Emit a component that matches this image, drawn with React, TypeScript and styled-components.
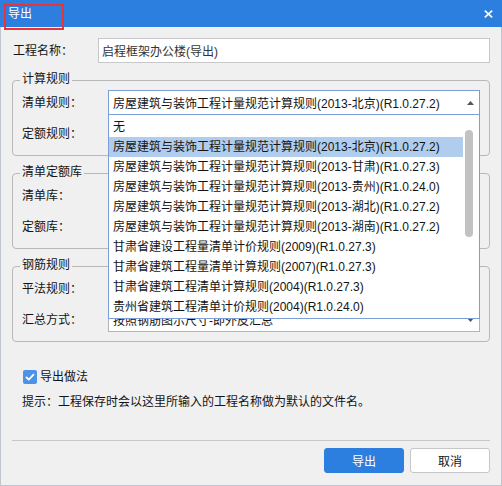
import React from 'react';
import styled, { createGlobalStyle } from 'styled-components';

const Global = createGlobalStyle`
  html, body { margin: 0; padding: 0; background: #ffffff; }
  body {
    font-family: "Liberation Sans", "Noto Sans CJK SC", sans-serif;
    font-size: 12px;
    color: #141414;
  }
  * { box-sizing: border-box; }
`;

const Window = styled.div`
  position: relative;
  width: 502px;
  height: 486px;
  display: flex;
  flex-direction: column;
  background: #f0f0f0;
`;

const TitleBar = styled.div`
  height: 27px;
  flex-shrink: 0;
  background: #2c7fdf;
  color: #ffffff;
  display: flex;
  align-items: center;
  justify-content: space-between;
  padding: 0 9px 0 8px;
  line-height: 16px;
`;

const Annotation = styled.div`
  position: absolute;
  left: 4px;
  top: 4px;
  width: 60px;
  height: 26px;
  border: 2px solid #ea3338;
  pointer-events: none;
`;

const CloseIcon = styled.svg`
  display: block;
`;

const Body = styled.div`
  flex: 1;
  border: 1px solid #c0c6ce;
  border-top: none;
  padding: 11px 11px 12px;
  display: flex;
  flex-direction: column;
`;

const NameRow = styled.div`
  display: flex;
  align-items: center;
  height: 25px;
`;

const NameLabel = styled.div`
  width: 85px;
  margin-left: 1px;
  line-height: 16px;
`;

const TextInput = styled.div`
  flex: 1;
  height: 25px;
  border: 1px solid #c8c8cc;
  background: #ffffff;
  display: flex;
  align-items: center;
  padding-left: 3px;
  color: #333333;
`;

const GroupBox = styled.div<{ $gap: number; $front?: boolean }>`
  position: relative;
  z-index: ${(p) => (p.$front ? 2 : 'auto')};
  margin-top: ${(p) => p.$gap}px;
  height: 76px;
  border: 1px solid #b8b8b8;
  border-radius: 4px;
  padding: 9px 9px;
  display: flex;
  flex-direction: column;
  gap: 6px;
`;

const GroupTitle = styled.div`
  position: absolute;
  left: 7px;
  top: -10px;
  padding: 0 2px;
  line-height: 16px;
  background: #f0f0f0;
`;

const FieldRow = styled.div`
  display: flex;
  align-items: center;
  height: 25px;
`;

const FieldLabel = styled.div`
  width: 86px;
  flex-shrink: 0;
  line-height: 16px;
`;

const SelectWrap = styled.div`
  position: relative;
  flex: 1;
  height: 25px;
`;

const SelectBox = styled.div<{ $open?: boolean }>`
  height: 25px;
  border: 1px solid ${(p) => (p.$open ? '#7b9ed8' : '#b4b4b4')};
  background: #ffffff;
  display: flex;
  align-items: center;
  padding-left: 4px;
  padding-right: 5px;
  white-space: nowrap;
  overflow: hidden;
`;

const SelectText = styled.span`
  flex: 1;
  overflow: hidden;
`;

const Arrow = styled.svg`
  display: block;
  flex-shrink: 0;
`;

const DropList = styled.div`
  position: absolute;
  left: 0;
  right: 0;
  top: calc(100% - 1px);
  z-index: 5;
  border: 1px solid #7b9ed8;
  background: #ffffff;
  display: flex;
  padding: 2px 0 1px;
`;

const Items = styled.div`
  flex: 1;
  display: flex;
  flex-direction: column;
`;

const Item = styled.div<{ $active?: boolean }>`
  height: 20px;
  line-height: 20px;
  padding-left: 4px;
  white-space: nowrap;
  background: ${(p) => (p.$active ? '#b1cdee' : 'transparent')};
`;

const Track = styled.div`
  width: 16px;
  flex-shrink: 0;
  padding-left: 2px;
`;

const Thumb = styled.div`
  width: 8px;
  height: 107px;
  margin-top: 13px;
  border-radius: 4px;
  background: #c2c2c2;
`;

const CheckRow = styled.label`
  display: flex;
  align-items: center;
  height: 16px;
  margin-top: 27px;
  margin-left: 11px;
  gap: 3px;
  line-height: 16px;
`;

const CheckMark = styled.span`
  width: 14px;
  height: 14px;
  border-radius: 2px;
  background: #4c93e8;
  display: flex;
  align-items: center;
  justify-content: center;
`;

const Hint = styled.div`
  margin-top: 9px;
  margin-left: 10px;
  line-height: 16px;
`;

const Separator = styled.div`
  margin-top: 30px;
  height: 1px;
  background: #c8c8c8;
`;

const ButtonRow = styled.div`
  margin-top: 7px;
  display: flex;
  justify-content: flex-end;
  gap: 6px;
`;

const Button = styled.button<{ $primary?: boolean }>`
  width: 80px;
  height: 25px;
  padding: 0;
  font-family: inherit;
  font-size: 12px;
  border-radius: 3px;
  border: 1px solid ${(p) => (p.$primary ? '#2c7fdf' : '#c6c6c6')};
  background: ${(p) => (p.$primary ? '#2c7fdf' : '#ffffff')};
  color: ${(p) => (p.$primary ? '#ffffff' : '#141414')};
`;

const listItems = [
  '无',
  '房屋建筑与装饰工程计量规范计算规则(2013-北京)(R1.0.27.2)',
  '房屋建筑与装饰工程计量规范计算规则(2013-甘肃)(R1.0.27.3)',
  '房屋建筑与装饰工程计量规范计算规则(2013-贵州)(R1.0.24.0)',
  '房屋建筑与装饰工程计量规范计算规则(2013-湖北)(R1.0.27.2)',
  '房屋建筑与装饰工程计量规范计算规则(2013-湖南)(R1.0.27.2)',
  '甘肃省建设工程量清单计价规则(2009)(R1.0.27.3)',
  '甘肃省建筑工程量清单计算规则(2007)(R1.0.27.3)',
  '甘肃省建筑工程清单计算规则(2004)(R1.0.27.3)',
  '贵州省建筑工程清单计价规则(2004)(R1.0.24.0)',
];

const ArrowIcon = ({ up }: { up?: boolean }) => (
  <Arrow width="7" height="4" viewBox="0 0 7 4">
    {up ? <path d="M0 4 L3.5 0 L7 4 Z" fill="#555" /> : <path d="M0 0 L3.5 4 L7 0 Z" fill="#555" />}
  </Arrow>
);

const Select = ({ value, open }: { value: string; open?: boolean }) => (
  <SelectWrap>
    <SelectBox $open={open}>
      <SelectText>{value}</SelectText>
      <ArrowIcon up={open} />
    </SelectBox>
    {open && (
      <DropList>
        <Items>
          {listItems.map((t, i) => (
            <Item key={i} $active={i === 1}>
              {t}
            </Item>
          ))}
        </Items>
        <Track>
          <Thumb />
        </Track>
      </DropList>
    )}
  </SelectWrap>
);

export default function App() {
  return (
    <>
      <Global />
      <Window>
        <TitleBar>
          <span>导出</span>
          <CloseIcon width="9" height="8" viewBox="0 0 9 8">
            <path d="M0.8 0.6 L8.2 7.4 M8.2 0.6 L0.8 7.4" stroke="#ffffff" strokeWidth="1.6" />
          </CloseIcon>
        </TitleBar>
        <Annotation />
        <Body>
          <NameRow>
            <NameLabel>工程名称：</NameLabel>
            <TextInput>启程框架办公楼(导出)</TextInput>
          </NameRow>

          <GroupBox $gap={17} $front>
            <GroupTitle>计算规则</GroupTitle>
            <FieldRow>
              <FieldLabel>清单规则：</FieldLabel>
              <Select value="房屋建筑与装饰工程计量规范计算规则(2013-北京)(R1.0.27.2)" open />
            </FieldRow>
            <FieldRow>
              <FieldLabel>定额规则：</FieldLabel>
              <Select value="北京市建设工程预算定额计算规则(2012)(R1.0.27.2)" />
            </FieldRow>
          </GroupBox>

          <GroupBox $gap={17}>
            <GroupTitle>清单定额库</GroupTitle>
            <FieldRow>
              <FieldLabel>清单库：</FieldLabel>
              <Select value="工程量清单项目计量规范(2013-北京)" />
            </FieldRow>
            <FieldRow>
              <FieldLabel>定额库：</FieldLabel>
              <Select value="北京市建设工程预算定额(2012)" />
            </FieldRow>
          </GroupBox>

          <GroupBox $gap={17}>
            <GroupTitle>钢筋规则</GroupTitle>
            <FieldRow>
              <FieldLabel>平法规则：</FieldLabel>
              <Select value="16系平法规则" />
            </FieldRow>
            <FieldRow>
              <FieldLabel>汇总方式：</FieldLabel>
              <Select value="按照钢筋图示尺寸-即外皮汇总" />
            </FieldRow>
          </GroupBox>

          <CheckRow>
            <CheckMark>
              <svg width="10" height="8" viewBox="0 0 10 8">
                <path d="M1 4 L3.8 6.6 L9 1.2" stroke="#ffffff" strokeWidth="1.8" fill="none" />
              </svg>
            </CheckMark>
            <span>导出做法</span>
          </CheckRow>
          <Hint>提示：工程保存时会以这里所输入的工程名称做为默认的文件名。</Hint>
          <Separator />
          <ButtonRow>
            <Button $primary>导出</Button>
            <Button>取消</Button>
          </ButtonRow>
        </Body>
      </Window>
    </>
  );
}
